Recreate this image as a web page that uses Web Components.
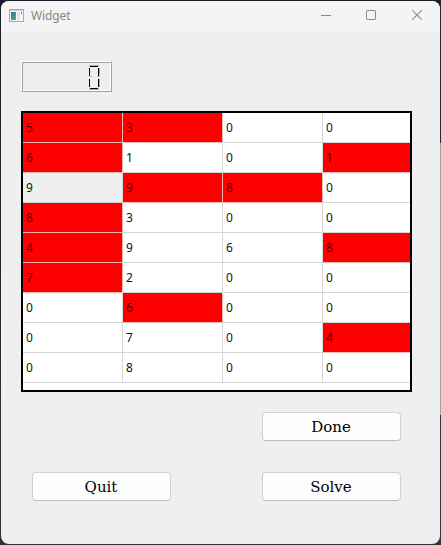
<!DOCTYPE html>
<html lang="en"><head><meta charset="utf-8"><title>Widget</title>
<style>
html,body{margin:0;height:100%;overflow:hidden}
body{background:linear-gradient(#25262f 0 143px,#a3a3a3 143px 415px,#30333c 415px) right/1px 100% no-repeat,linear-gradient(#1b1d2c,#30333c);font-family:"Noto Sans","Open Sans",sans-serif}
</style></head><body>
<app-window caption="Widget">
<lcd-number></lcd-number>
<number-table></number-table>
<div style="display:grid;grid-template-columns:139px 139px;justify-content:space-between;row-gap:31px;margin:20px 39px 0 31px">
<span></span><push-button>Done</push-button><push-button>Quit</push-button><push-button>Solve</push-button>
</div>
</app-window>
<script>
class Base extends HTMLElement{
  connectedCallback(){ if(!this.shadowRoot) this.attachShadow({mode:'open'}).innerHTML=this.render(); }
}
customElements.define('title-bar',class extends Base{render(){return `<style>
:host{display:flex;align-items:center;height:30px;background:#f4f4f4;color:#868686;font-size:12px;letter-spacing:-.1px}
.icon{margin:-2px 7px 0 8px}span{flex:1;margin-top:-1px}.ctl{width:45px;display:flex;justify-content:center;margin-top:-2px}.ctl:last-child{width:47px}
svg{display:block}
</style><svg class="icon" width="15" height="13" viewBox="0 0 15 13"><rect x=".5" y=".5" width="14" height="12" fill="#f6f9f9" stroke="#a3abb0"/><path d="M1 1h13v1H1z" fill="#c5d0d4"/><defs><linearGradient id="g" x2="1" y2="1"><stop stop-color="#3f7491"/><stop offset="1" stop-color="#5fa58b"/></linearGradient></defs><rect x="2" y="3" width="5" height="8" fill="url(#g)"/><path d="M8 3h3v8H8z" fill="#dce5e6"/><path d="M12 3h1v2h-1z" fill="#71858c"/></svg>
<span><slot></slot></span>
<div class="ctl"><svg width="10" height="10"><path d="M0 5.5h10" stroke="#8b8b8b"/></svg></div>
<div class="ctl"><svg width="10" height="10"><rect x=".5" y=".5" width="9" height="9" rx=".6" fill="none" stroke="#8b8b8b"/></svg></div>
<div class="ctl"><svg width="10" height="10"><path d="M.2.2l9.6 9.6M9.8.2L.2 9.8" stroke="#8b8b8b" stroke-width="1.1"/></svg></div>`}});
customElements.define('app-window',class extends Base{render(){return `<style>
:host{display:block;box-sizing:border-box;height:543px;width:439px;margin:1px;background:#efefef;border-radius:8px;overflow:hidden}
</style><title-bar>${this.getAttribute('caption')}</title-bar><slot></slot>`}});
customElements.define('lcd-number',class extends Base{render(){return `<style>
:host{display:flex;justify-content:flex-end;box-sizing:border-box;width:91px;height:31px;margin:30px 0 0 20px;border:1px solid;border-color:#fff #a0a0a0 #a0a0a0 #fff}
div{flex:1;display:flex;justify-content:flex-end;border:1px solid;border-color:#a0a0a0 #fff #fff #a0a0a0}svg{display:block;margin:2px 10px 0 0}
</style><div><svg width="12" height="25" shape-rendering="crispEdges"><path d="M1 0h10v1H1zM1 24h10v1H1zM11 3h1v8h-1zM11 14h1v8h-1zM2 11h2v1H2zM9 11h2v1H9z" fill="#aaa"/><path d="M2 1h8v1H2zM2 23h8v1H2zM1 3h1v8H1zM10 3h1v8h-1zM1 14h1v8H1zM10 14h1v8h-1z" fill="#000"/></svg></div>`}});
const ROWS=['5! 3! 0 0','6! 1 0 1!','9* 9! 8! 0','8! 3 0 0','4! 9 6 8!','7! 2 0 0','0 6! 0 0','0 7 0 4!','0 8 0 0'];
customElements.define('number-table',class extends Base{render(){return `<style>
:host{display:grid;box-sizing:border-box;width:391px;height:281px;margin:19px 0 0 20px;border:2px solid #000;background:#fff;grid-template-columns:100px 100px 100px 87px;grid-auto-rows:30px;font-size:12px;color:#111}
div{box-sizing:border-box;border:solid #d6d6d6;border-width:0 1px 1px 0;padding-left:3px;line-height:30px;overflow:hidden}
div:nth-of-type(4n){border-right:0}.r{background:#f00;color:#4b0505;border-color:#f3b9b4}.s{background:#efefef}
</style>${ROWS.flatMap(r=>r.split(' ')).map(c=>`<div class="${c[1]=='!'?'r':c[1]=='*'?'s':''}">${c[0]}</div>`).join('')}`}});
customElements.define('push-button',class extends Base{render(){return `<style>
:host{display:flex;align-items:center;justify-content:center;box-sizing:border-box;width:139px;height:29px;padding-right:1px;background:#fdfdfd;border:1px solid #d0d0d0;border-bottom-color:#bcbcbc;border-radius:4px;font:15px "DejaVu Serif",serif;color:#000}
</style><slot></slot>`}});
</script></body></html>
